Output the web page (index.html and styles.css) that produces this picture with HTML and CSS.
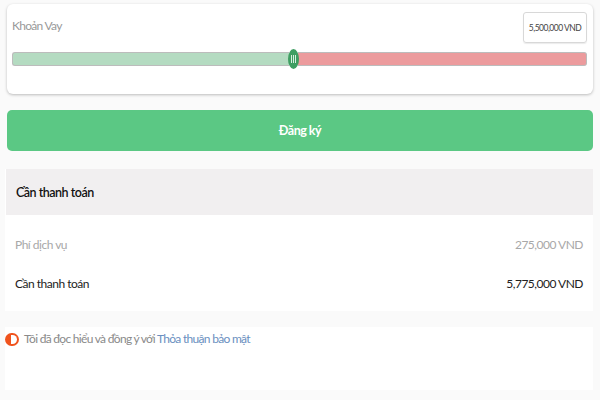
FILE: index.html
```html
<!DOCTYPE html>
<html>
<head>
<meta charset="utf-8">
<title>Khoản Vay</title>
<link rel="stylesheet" href="styles.css">
</head>
<body>
<div class="page">

<div class="loan-card">
  <div class="loan-top">
    <span class="loan-label">Khoản Vay</span>
    <span class="amount-box">5,500,000 VND</span>
  </div>
  <div class="slider">
    <div class="track-fill"></div>
    <div class="thumb"><i></i><i></i><i></i></div>
    <div class="track-rest"></div>
  </div>
</div>

<button class="submit">Đăng ký</button>

<div class="summary">
  <div class="summary-head">Cần thanh toán</div>
  <div class="summary-body">
    <div class="row muted"><span>Phí dịch vụ</span><span>275,000 VND</span></div>
    <div class="row"><span>Cần thanh toán</span><span>5,775,000 VND</span></div>
  </div>
</div>

<div class="agree">
  <span class="toggle"></span>
  <span class="agree-text">Tôi đã đọc hiểu và đồng ý với <a href="#" class="link">Thỏa thuận bảo mật</a></span>
</div>

</div>
</body>
</html>
```

FILE: styles.css
```css
/* Loan form */

html, body
{ margin: 0;
  padding: 0;
  background-color: #fafafa;
}

body
{ font-family: Lato, "Noto Sans", sans-serif;
  font-size: 12px;
  letter-spacing: -0.5px;
  color: #222;
}

.page
{ padding: 4px 7px 10px 5px;
  display: flex;
  flex-direction: column;
}

/* Loan card */

.loan-card
{ margin-left: 2px;
  height: 90px;
  box-sizing: border-box;
  background-color: #fff;
  border-radius: 6px;
  box-shadow: 0 1px 3px rgba(0,0,0,0.25);
  padding: 8px 6px 0 5px;
}

.loan-top
{ display: flex;
  justify-content: space-between;
  align-items: flex-start;
  height: 37px;
}

.loan-label
{ color: #999;
  margin-top: 6px;
  font-size: 12px;
  letter-spacing: -0.7px;
}

.amount-box
{ width: 64px;
  height: 31px;
  box-sizing: border-box;
  border: 1px solid #d8d8d8;
  border-radius: 3px;
  font-size: 8.5px;
  letter-spacing: -0.5px;
  color: #444;
  display: flex;
  align-items: center;
  justify-content: center;
  box-shadow: 0 1px 1px rgba(0,0,0,0.08);
}

.slider
{ display: flex;
  align-items: center;
  height: 20px;
}

.track-fill, .track-rest
{ height: 14px;
  border: 1px solid #bcbcbc;
  box-sizing: border-box;
}

.track-fill
{ width: 277px;
  background-color: #b4dbc1;
  border-radius: 3px 0 0 3px;
  border-right: none;
}

.track-rest
{ flex: 1;
  background-color: #ec9b9d;
  border-radius: 0 3px 3px 0;
  border-left: none;
}

.thumb
{ width: 11px;
  height: 20px;
  border-radius: 50%;
  background-color: #3f9e62;
  display: flex;
  justify-content: center;
  align-items: center;
  gap: 1px;
  margin: 0 -1px;
  z-index: 1;
}

.thumb i
{ width: 1px;
  height: 8px;
  background-color: #d8efe0;
}

/* Button */

.submit
{ margin: 16px 0 0 2px;
  height: 41px;
  border: none;
  border-radius: 5px;
  background-color: #5bc884;
  color: #fff;
  font-family: Lato, "Noto Sans", sans-serif;
  font-weight: bold;
  font-size: 12.5px;
  letter-spacing: -0.5px;
}

/* Summary */

.summary
{ margin-top: 18px;
  background-color: #fff;
}

.summary-head
{ background-color: #f1eff0;
  height: 46px;
  margin-left: 1px;
  padding-left: 10px;
  display: flex;
  align-items: center;
  font-size: 12.5px;
  font-weight: 600;
  color: #111;
}

.summary-body
{ padding: 23px 10px 20px 10px;
  display: flex;
  flex-direction: column;
  gap: 25px;
}

.row
{ display: flex;
  justify-content: space-between;
  line-height: 14px;
  font-size: 12px;
  color: #222;
}

.row.muted
{ color: #a8a8a8;
}

/* Agreement */

.agree
{ margin-top: 16px;
  height: 63px;
  background-color: #fff;
  display: flex;
  align-items: flex-start;
  padding-top: 5px;
  box-sizing: border-box;
}

.toggle
{ width: 14px;
  height: 13px;
  margin-top: 1px;
  border-radius: 7px;
  background-color: #f0531d;
  position: relative;
  flex-shrink: 0;
}

.toggle::after
{ content: "";
  position: absolute;
  right: 2px;
  top: 2px;
  width: 6px;
  height: 9px;
  border-radius: 0 5px 5px 0;
  background-color: #fff;
}

.agree-text
{ margin-left: 5px;
  color: #8a8a8a;
  font-size: 12px;
  letter-spacing: -0.7px;
  line-height: 14px;
}

.link
{ color: #6a8fc0;
  text-decoration: none;
}
```
